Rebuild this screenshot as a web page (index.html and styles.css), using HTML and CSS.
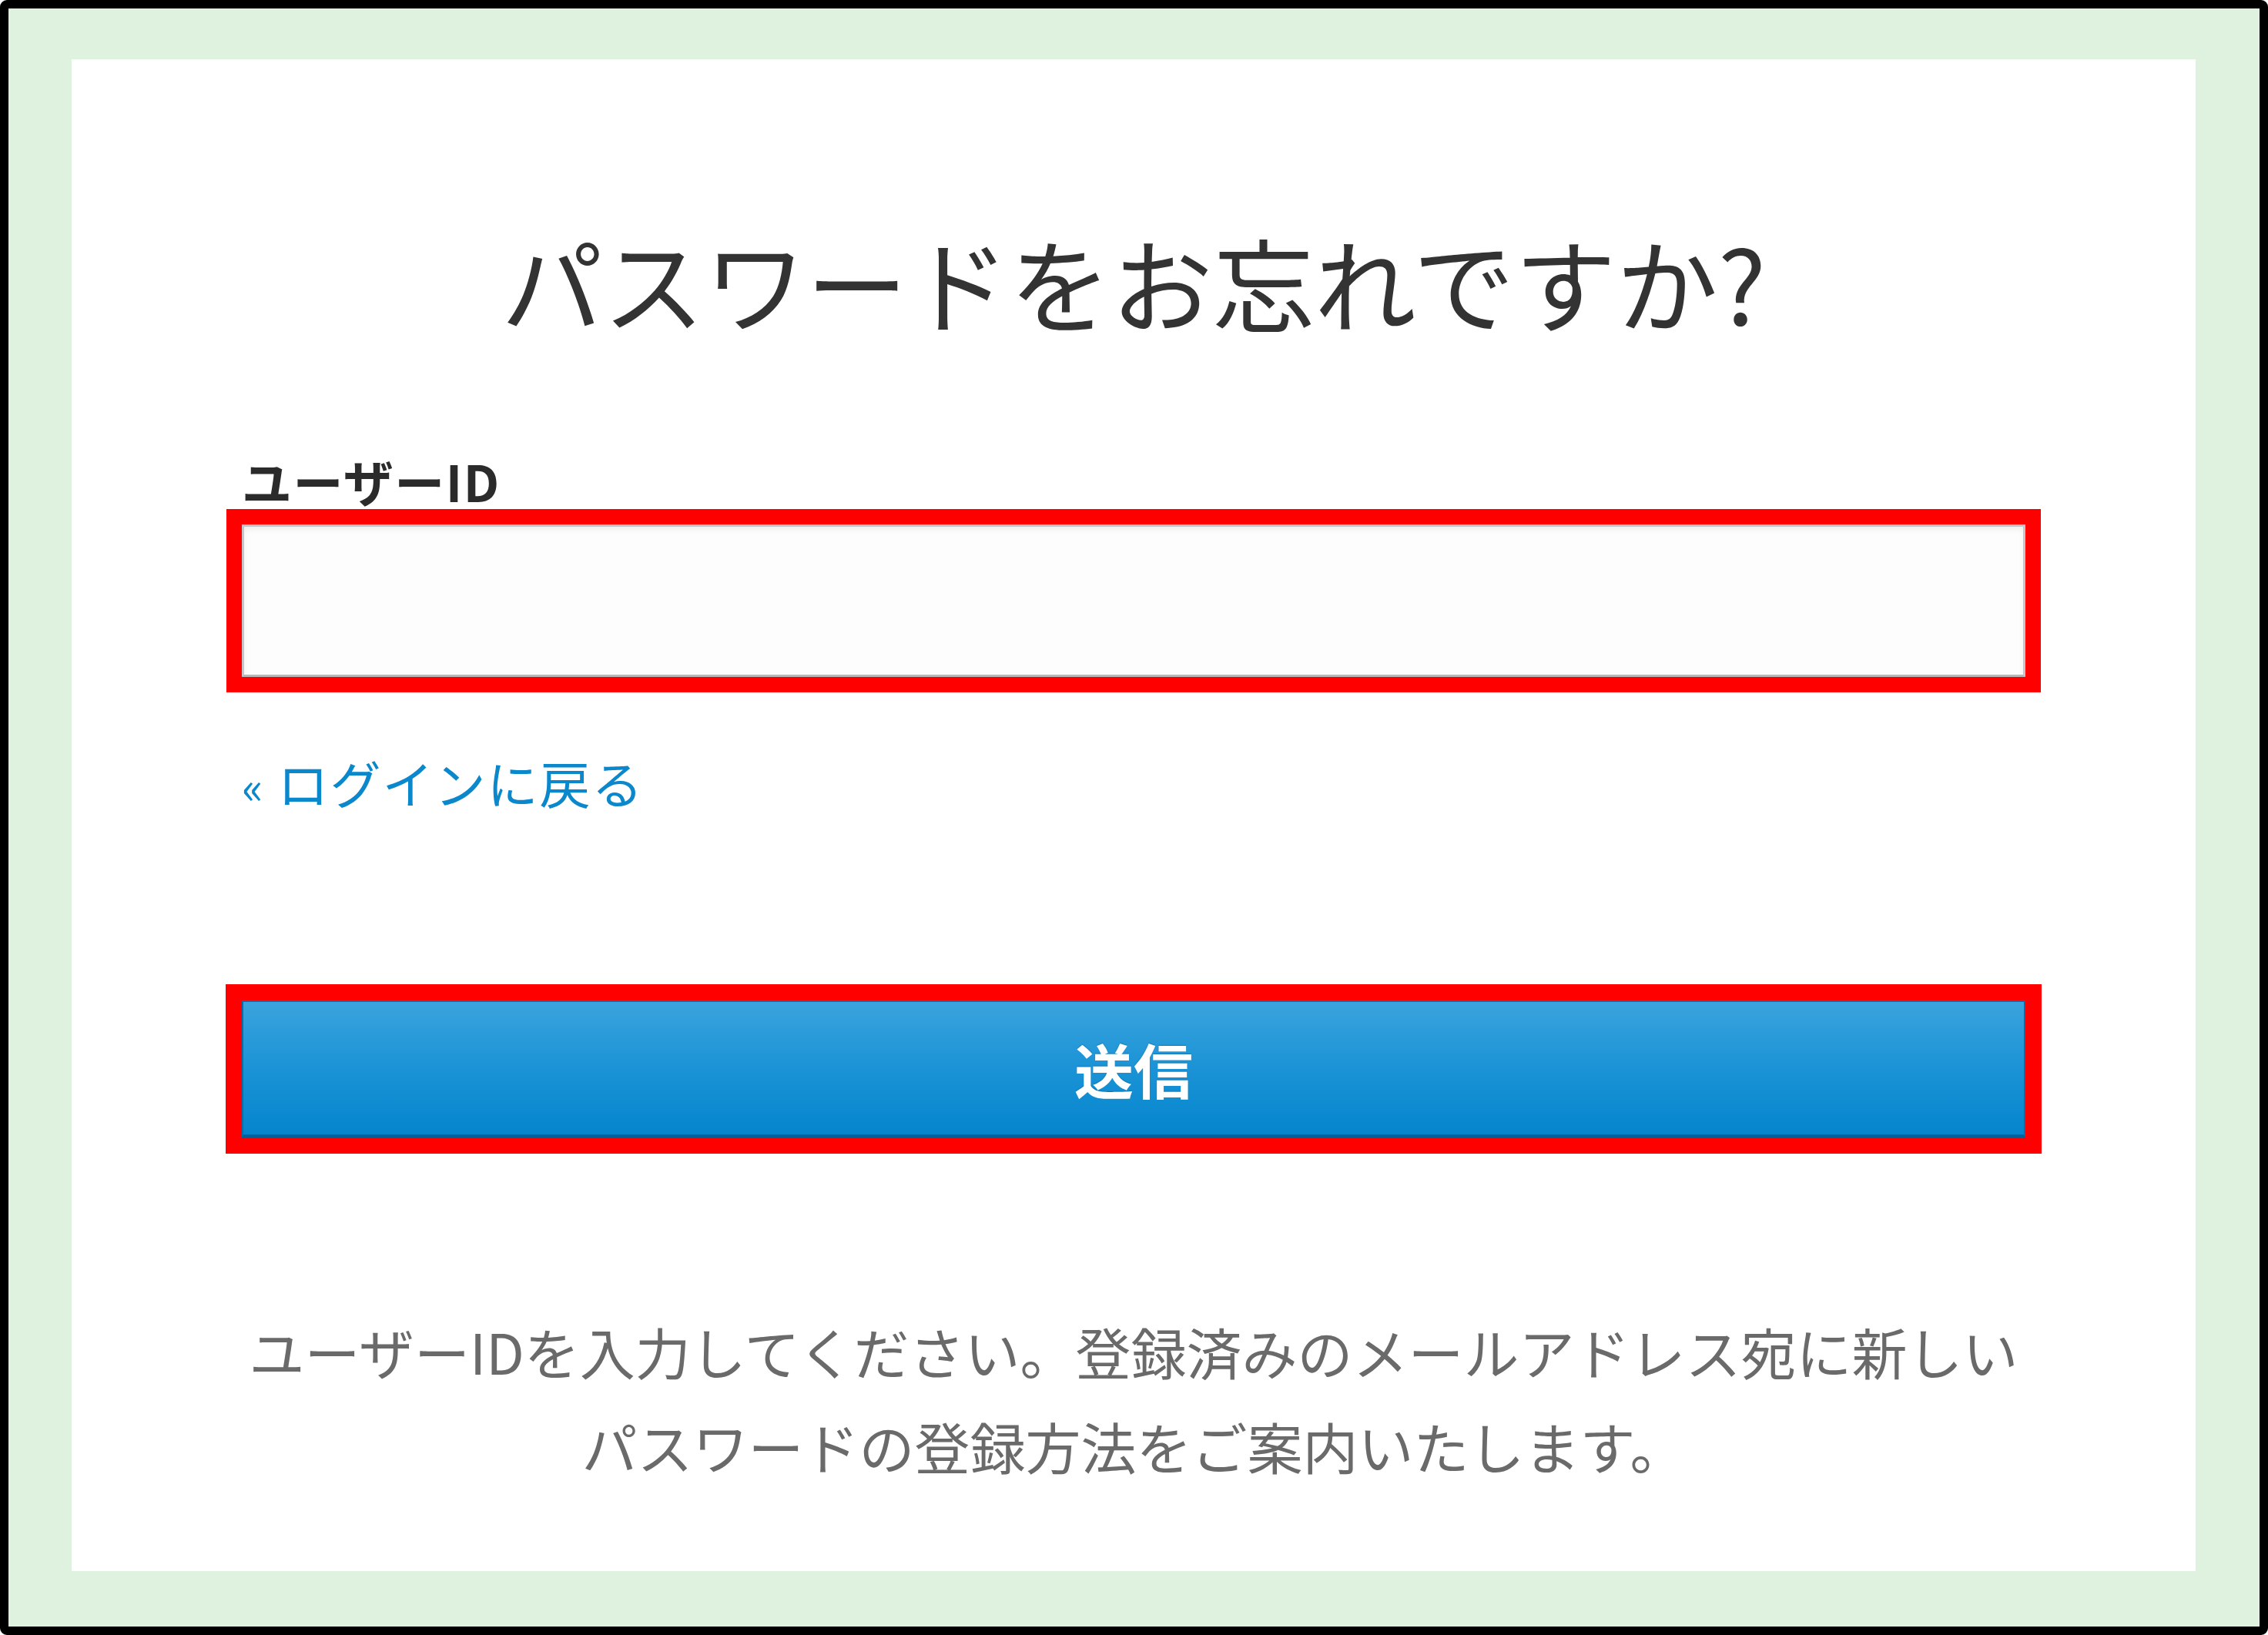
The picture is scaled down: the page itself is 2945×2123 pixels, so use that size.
FILE: index.html
```html
<!DOCTYPE html>
<html lang="ja">
<head>
<meta charset="utf-8">
<title>パスワードをお忘れですか?</title>
<link rel="stylesheet" href="styles.css">
</head>
<body>
<div class="frame">
  <div class="panel">
    <h1 class="title">パスワードをお忘れですか?</h1>
    <form class="form">
      <label class="label" for="uid">ユーザーID</label>
      <div class="input-wrap"><input id="uid" class="input" type="text"></div>
      <a class="back" href="#"><span class="raquo">«</span> ログインに戻る</a>
      <button class="submit" type="button">送信</button>
      <p class="note">ユーザーIDを入力してください。登録済みのメールアドレス宛に新しい<br>パスワードの登録方法をご案内いたします。</p>
    </form>
  </div>
</div>
</body>
</html>
```
FILE: styles.css
```css
html, body {
  margin: 0;
  padding: 0;
  width: 2945px;
  height: 2123px;
  overflow: hidden;
  background: #ffffff;
}
.frame {
  box-sizing: border-box;
  width: 2945px;
  height: 2123px;
  border: 11px solid #000000;
  border-radius: 9px;
  background: #dff1df;
  padding: 66px 83px 72px 82px;
  display: flex;
}
.panel {
  flex: 1;
  background: #ffffff;
  box-sizing: border-box;
  padding: 208px 221px 0 221px;
  font-family: "Noto Sans CJK JP", "Noto Sans", sans-serif;
}
.title {
  margin: 0;
  text-align: center;
  font-size: 132px;
  line-height: 160px;
  font-weight: 400;
  color: #333333;
  letter-spacing: 0;
}
.form {
  margin: 144px 0 0 0;
  display: flex;
  flex-direction: column;
}
.label {
  display: block;
  font-size: 65px;
  line-height: 70px;
  font-weight: 700;
  color: #2b2b2b;
  letter-spacing: 1.5px;
}
.input-wrap {
  margin-top: 22px;
  outline: 20px solid #ff0000;
}
.input {
  display: block;
  box-sizing: border-box;
  width: 100%;
  height: 198px;
  margin: 0;
  border: 3px solid #c6c6c6;
  border-bottom-color: #b8b8b8;
  background: #fdfdfd;
  box-shadow: inset 0 4px 6px rgba(0, 0, 0, 0.06);
  font-size: 60px;
}
.back {
  display: block;
  margin-top: 101px;
  font-size: 66px;
  line-height: 70px;
  color: #0b87cc;
  text-decoration: none;
  align-self: flex-start;
  letter-spacing: 2px;
}
.raquo {
  font-size: 58px;
}
.submit {
  display: block;
  box-sizing: border-box;
  width: 100%;
  height: 178px;
  margin: 245px 0 0 0;
  border: 2px solid #0b6eaa;
  border-bottom: 4px solid #055f98;
  background: linear-gradient(to bottom, #3aa4dd 0%, #1b93d6 50%, #0585cd 100%);
  color: #ffffff;
  font-family: "Noto Sans CJK JP", sans-serif;
  font-size: 77px;
  font-weight: 700;
  line-height: 1;
  outline: 21px solid #ff0000;
  text-shadow: 0 -1px 1px rgba(0, 60, 110, 0.35);
  padding: 0;
}
.note {
  margin: 215px 0 0 0;
  text-align: center;
  font-size: 72px;
  line-height: 123px;
  color: #6a6a6a;
  font-weight: 400;
  white-space: nowrap;
}
```
